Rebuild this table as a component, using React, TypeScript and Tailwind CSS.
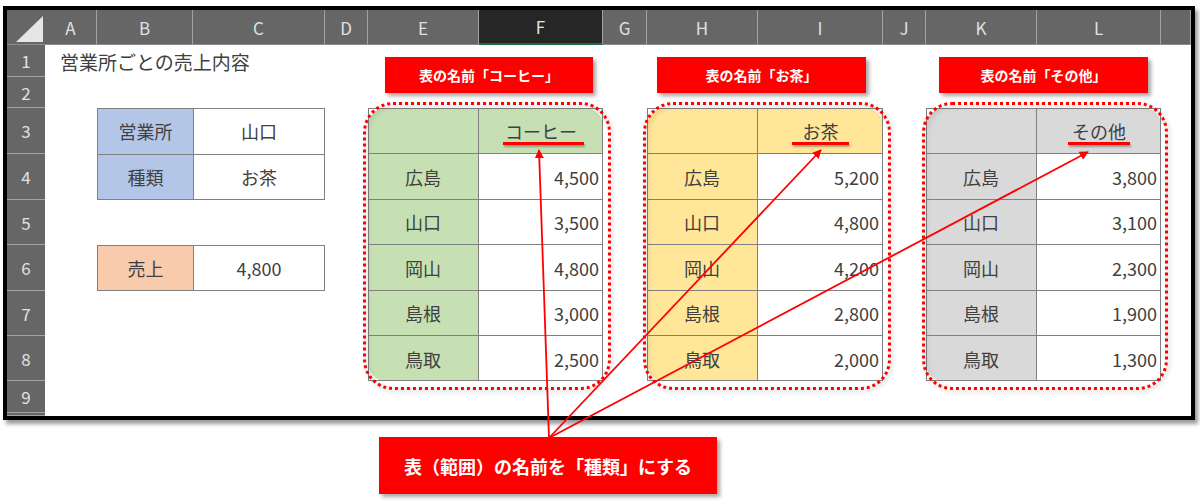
import React from 'react';

const jp = "font-[family-name:'Noto_Sans_CJK_JP','Noto_Sans',sans-serif]";

const colHeaders = [
  { label: 'A', cls: 'col-start-2' },
  { label: 'B', cls: 'col-start-3' },
  { label: 'C', cls: 'col-start-4' },
  { label: 'D', cls: 'col-start-5' },
  { label: 'E', cls: 'col-start-6' },
  { label: 'F', cls: 'col-start-7', active: true },
  { label: 'G', cls: 'col-start-8' },
  { label: 'H', cls: 'col-start-9' },
  { label: 'I', cls: 'col-start-10' },
  { label: 'J', cls: 'col-start-11' },
  { label: 'K', cls: 'col-start-12' },
  { label: 'L', cls: 'col-start-13' },
  { label: '', cls: 'col-start-14' },
];

const rowHeaders = [
  { label: '1', cls: 'row-start-2' },
  { label: '2', cls: 'row-start-3' },
  { label: '3', cls: 'row-start-4' },
  { label: '4', cls: 'row-start-5' },
  { label: '5', cls: 'row-start-6' },
  { label: '6', cls: 'row-start-7' },
  { label: '7', cls: 'row-start-8' },
  { label: '8', cls: 'row-start-9' },
  { label: '9', cls: 'row-start-10' },
  { label: '', cls: 'row-start-11' },
];

const places = ['広島', '山口', '岡山', '島根', '鳥取'];

const tables = [
  { title: 'コーヒー', fill: 'bg-[#c6e0b4]', pos: 'col-start-6', values: ['4,500', '3,500', '4,800', '3,000', '2,500'] },
  { title: 'お茶', fill: 'bg-[#ffe699]', pos: 'col-start-9', values: ['5,200', '4,800', '4,200', '2,800', '2,000'] },
  { title: 'その他', fill: 'bg-[#d9d9d9]', pos: 'col-start-12', values: ['3,800', '3,100', '2,300', '1,900', '1,300'] },
];

// floating shapes drawn on top of the sheet
const labels = [
  { text: '表の名前「コーヒー」', cls: 'left-[385px] w-[208px]' },
  { text: '表の名前「お茶」', cls: 'left-[657px] w-[209px]' },
  { text: '表の名前「その他」', cls: 'left-[939px] w-[209px]' },
];

const rings = ['left-[363px] w-[248px]', 'left-[643px] w-[248px]', 'left-[922px] w-[246px]'];

const underlines = ['left-[503px] w-[81px]', 'left-[792px] w-[57px]', 'left-[1068px] w-[62px]'];

const arrowTips = [
  [539, 150],
  [821, 150],
  [1088, 152],
];

type TableProps = { title: string; fill: string; pos: string; values: string[] };

const NameTable: React.FC<TableProps> = ({ title, fill, pos, values }) => (
  <div
    className={`${pos} col-span-2 row-start-4 row-span-6 relative grid grid-cols-[111px_1fr] grid-rows-[46px_46px_45px_46px_45px_45px] text-[18px] text-[#404040] leading-none`}
  >
    <div className={`${fill} rounded-tl-[18px] border-r border-b border-[#808080]`} />
    <div className={`${fill} rounded-tr-[18px] border-b border-[#808080] flex items-center justify-center`}>
      {title}
    </div>
    {places.map((p, i) => (
      <React.Fragment key={p}>
        <div
          className={`${fill} border-r border-[#808080] flex items-center justify-center ${
            i < 4 ? 'border-b' : 'rounded-bl-[18px]'
          }`}
        >
          {p}
        </div>
        <div className={`bg-white border-[#808080] flex items-center justify-end pr-[4px] ${i < 4 ? 'border-b' : ''}`}>
          {values[i]}
        </div>
      </React.Fragment>
    ))}
    <div className="absolute inset-0 border border-[#808080] pointer-events-none" />
  </div>
);

export default function App() {
  return (
    <div className={`relative w-[1200px] h-[502px] bg-white overflow-hidden ${jp}`}>
      {/* Sheet */}
      <div className="ml-[3px] mt-[6px] w-[1192px] border-4 border-black shadow-[3px_4px_4px_rgba(0,0,0,0.4)]">
        <div className="grid h-[406px] grid-cols-[38px_52px_96px_132px_43px_111px_124px_44px_111px_125px_43px_111px_124px_1fr] grid-rows-[35px_32px_31px_46px_46px_45px_46px_45px_45px_32px_1fr] bg-white">
          {/* corner */}
          <div className="col-start-1 row-start-1 bg-[#666666] border-b border-[#8c8c8c] flex items-end justify-end pr-[2px] pb-[2px]">
            <svg width="27" height="26" viewBox="0 0 27 26">
              <polygon points="27,0 27,26 0,26" fill="#e6e6e6" />
            </svg>
          </div>
          {colHeaders.map((c) => (
            <div
              key={c.cls}
              className={`${c.cls} row-start-1 flex items-center justify-center text-[17px] leading-none ${
                c.active
                  ? 'bg-[#262626] border-b-2 border-b-[#1f6e43] text-[#e8e8e8]'
                  : 'bg-[#666666] border-b border-b-[#8c8c8c] text-[#e0e0e0]'
              } border-r border-r-[#a3a3a3]`}
            >
              {c.label}
            </div>
          ))}
          {rowHeaders.map((r) => (
            <div
              key={r.cls}
              className={`${r.cls} col-start-1 bg-[#666666] border-b border-[#a3a3a3] flex items-center justify-center text-[17px] leading-none text-[#e0e0e0] overflow-hidden`}
            >
              {r.label}
            </div>
          ))}

          {/* A1 title */}
          <div className="col-start-2 row-start-2 flex items-center pl-[15px] whitespace-nowrap text-[19px] leading-none text-[#404040]">
            営業所ごとの売上内容
          </div>

          {/* search conditions */}
          <div className="col-start-3 col-span-2 row-start-4 row-span-2 grid grid-cols-[96px_1fr] grid-rows-2 border-l border-t border-[#808080] text-[18px] leading-none text-[#404040]">
            <div className="bg-[#b4c6e7] border-r border-b border-[#808080] flex items-center justify-center">営業所</div>
            <div className="bg-white border-r border-b border-[#808080] flex items-center justify-center">山口</div>
            <div className="bg-[#b4c6e7] border-r border-b border-[#808080] flex items-center justify-center">種類</div>
            <div className="bg-white border-r border-b border-[#808080] flex items-center justify-center">お茶</div>
          </div>
          <div className="col-start-3 col-span-2 row-start-7 grid grid-cols-[96px_1fr] border-l border-t border-[#808080] text-[18px] leading-none text-[#404040]">
            <div className="bg-[#f8cbad] border-r border-b border-[#808080] flex items-center justify-center">売上</div>
            <div className="bg-white border-r border-b border-[#808080] flex items-center justify-center">4,800</div>
          </div>

          {tables.map((t) => (
            <NameTable key={t.title} {...t} />
          ))}
        </div>
      </div>

      {/* callout */}
      <div className="ml-[379px] mt-[17px] w-[338px] h-[57px] bg-[#ff0000] shadow-[3px_3px_4px_rgba(0,0,0,0.35)] flex items-center justify-center text-white text-[18px] font-bold leading-none">
        表（範囲）の名前を「種類」にする
      </div>

      {labels.map((l) => (
        <div
          key={l.text}
          className={`absolute top-[57px] h-[36px] ${l.cls} bg-[#ff0000] shadow-[3px_3px_4px_rgba(0,0,0,0.35)] flex items-center justify-center text-white text-[14px] font-bold leading-none`}
        >
          {l.text}
        </div>
      ))}

      {rings.map((r) => (
        <div
          key={r}
          className={`absolute top-[102px] h-[288px] ${r} rounded-[30px] border-[3px] border-dotted border-[#ff0000] drop-shadow-[2px_2px_2px_rgba(0,0,0,0.25)] pointer-events-none`}
        />
      ))}

      {underlines.map((u) => (
        <div key={u} className={`absolute top-[142px] h-[3px] ${u} bg-[#ff0000] shadow-[1px_2px_2px_rgba(0,0,0,0.3)]`} />
      ))}

      <svg className="absolute inset-0 pointer-events-none" width="1200" height="502" viewBox="0 0 1200 502">
        <defs>
          <marker id="tip" viewBox="0 0 10 10" refX="9" refY="5" markerWidth="5" markerHeight="5" orient="auto">
            <path d="M0,0 L10,5 L0,10 Z" fill="#ff0000" />
          </marker>
        </defs>
        {arrowTips.map(([x, y]) => (
          <line
            key={x}
            x1={549}
            y1={438}
            x2={x}
            y2={y}
            stroke="#ff0000"
            strokeWidth={1.8}
            markerEnd="url(#tip)"
          />
        ))}
      </svg>
    </div>
  );
}
